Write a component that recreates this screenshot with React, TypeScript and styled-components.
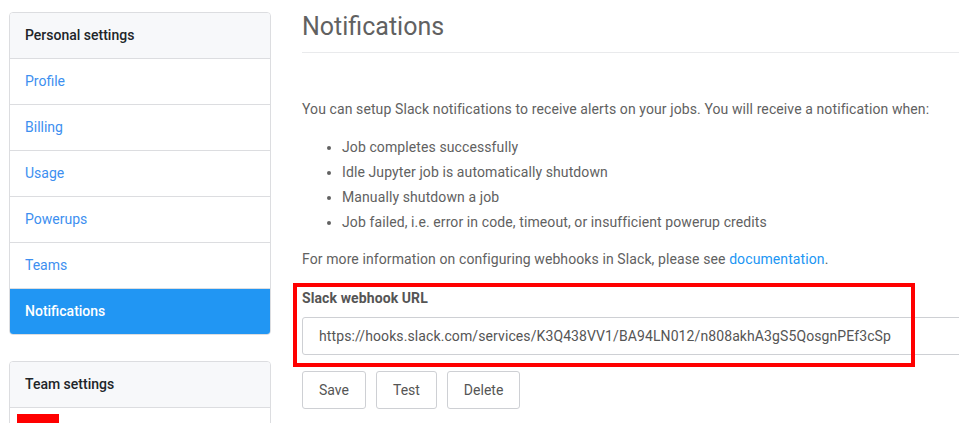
import styled, { createGlobalStyle } from 'styled-components'

const GlobalStyle = createGlobalStyle`
  html, body {
    margin: 0;
    padding: 0;
    background: #fff;
    overflow: hidden;
  }
  body {
    font-family: Roboto, "Liberation Sans", Arial, sans-serif;
    font-size: 14px;
    letter-spacing: 0.1px;
    color: #616161;
  }
`

const personalLinks = ['Profile', 'Billing', 'Usage', 'Powerups', 'Teams', 'Notifications']
const reasons = [
  'Job completes successfully',
  'Idle Jupyter job is automatically shutdown',
  'Manually shutdown a job',
  'Job failed, i.e. error in code, timeout, or insufficient powerup credits',
]

export default function App() {
  return (
    <>
      <GlobalStyle />
      <Page>
        <Sidebar>
          <Card>
            <CardHeader>Personal settings</CardHeader>
            {personalLinks.map((label) => (
              <NavItem key={label} href="#" $active={label === 'Notifications'}>
                {label}
              </NavItem>
            ))}
          </Card>
          <Card>
            <CardHeader>Team settings</CardHeader>
            <TeamItem>
              <Redacted />
            </TeamItem>
          </Card>
        </Sidebar>

        <Main>
          <Heading>Notifications</Heading>
          <Intro>
            You can setup Slack notifications to receive alerts on your jobs. You will receive a
            notification when:
          </Intro>
          <ReasonList>
            {reasons.map((r) => (
              <li key={r}>{r}</li>
            ))}
          </ReasonList>
          <Info>
            For more information on configuring webhooks in Slack, please see{' '}
            <Link href="#">documentation</Link>.
          </Info>

          <FormGroup>
            <Highlight />
            <Label htmlFor="webhook">Slack webhook URL</Label>
            <Input
              id="webhook"
              readOnly
              value="https://hooks.slack.com/services/K3Q438VV1/BA94LN012/n808akhA3gS5QosgnPEf3cSp"
            />
          </FormGroup>

          <Actions>
            <Button>Save</Button>
            <Button>Test</Button>
            <Button>Delete</Button>
          </Actions>
        </Main>
      </Page>
    </>
  )
}

const Page = styled.div`
  display: flex;
  align-items: flex-start;
  gap: 31px;
  width: 1000px;
  padding: 12px 0 0 9px;
  box-sizing: border-box;
`

const Sidebar = styled.aside`
  width: 262px;
  flex-shrink: 0;
  display: flex;
  flex-direction: column;
  gap: 26px;
`

const Card = styled.div`
  border: 1px solid #dcdde0;
  border-radius: 4px;
  overflow: hidden;
  display: flex;
  flex-direction: column;
`

const CardHeader = styled.div`
  background: #f7f8fa;
  color: #212529;
  padding: 14px 15px 15px;
  line-height: 16px;
  font-size: 14px;
  font-weight: 500;
  letter-spacing: 0;
  border-bottom: 1px solid #dcdde0;
`

const NavItem = styled.a<{ $active?: boolean }>`
  display: block;
  padding: 14px 15px 15px;
  line-height: 16px;
  font-size: 14px;
  letter-spacing: 0;
  text-decoration: none;
  color: ${({ $active }) => ($active ? '#fff' : '#3d8ff0')};
  background: ${({ $active }) => ($active ? '#2196f3' : '#fff')};
  font-weight: ${({ $active }) => ($active ? 500 : 400)};
  border-bottom: 1px solid #dcdde0;

  &:last-child {
    border-bottom: 0;
  }
`

const TeamItem = styled.div`
  padding: 6px 7px;
  height: 40px;
`

const Redacted = styled.div`
  width: 42px;
  height: 24px;
  background: #ff0000;
`

const Main = styled.main`
  flex: 1;
  min-width: 0;
`

const Heading = styled.h1`
  margin: 0;
  height: 40px;
  font-size: 25px;
  line-height: 30px;
  font-weight: 400;
  letter-spacing: 0;
  color: #616161;
  border-bottom: 1px solid #e9eaec;
`

const Intro = styled.p`
  margin: 46px 0 16px;
  line-height: 20px;
`

const ReasonList = styled.ul`
  margin: 0;
  padding-left: 40px;
  line-height: 25px;
`

const Info = styled.p`
  margin: 14px 0 19px;
  line-height: 20px;
`

const Link = styled.a`
  color: #2196f3;
  text-decoration: none;
`

const FormGroup = styled.div`
  position: relative;
  display: flex;
  flex-direction: column;
  gap: 9px;
`

const Highlight = styled.div`
  position: absolute;
  left: -9px;
  top: -5px;
  width: 622px;
  height: 84px;
  border: 4px solid #ff0000;
  box-sizing: border-box;
  pointer-events: none;
`

const Label = styled.label`
  font-weight: 700;
  line-height: 20px;
  color: #555;
`

const Input = styled.input`
  height: 38px;
  box-sizing: border-box;
  border: 1px solid #ced0d4;
  border-radius: 3px;
  padding: 0 16px;
  font-family: inherit;
  font-size: 14px;
  letter-spacing: 0.1px;
  color: #555;
  outline: none;
`

const Actions = styled.div`
  display: flex;
  gap: 10px;
  margin-top: 16px;
`

const Button = styled.button`
  height: 38px;
  padding: 0 16px;
  background: #fff;
  border: 1px solid #ced0d4;
  border-radius: 3px;
  font-family: inherit;
  font-size: 14px;
  color: #555;
  cursor: pointer;
`
